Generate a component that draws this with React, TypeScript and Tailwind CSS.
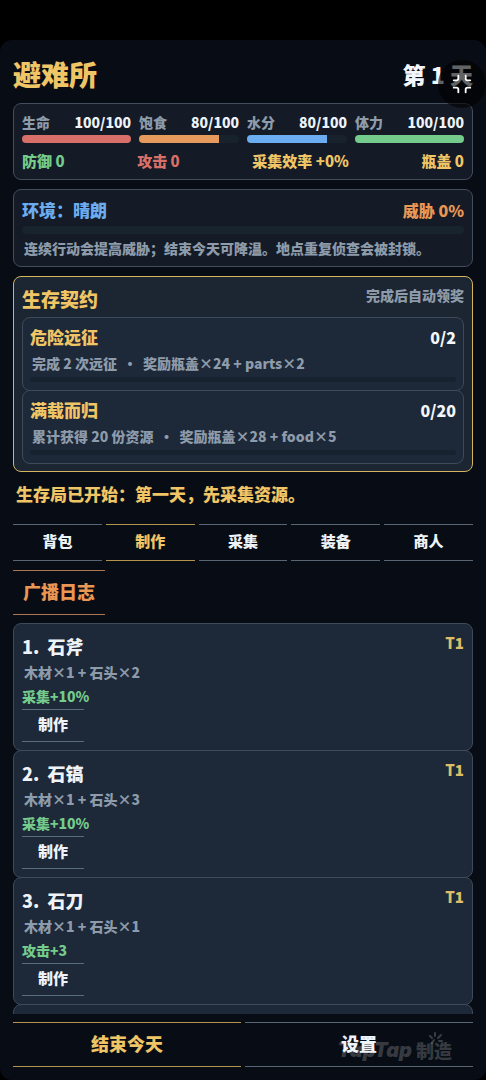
import { Minimize } from "lucide-react";

const stats = [
  { name: "生命", value: 100, max: 100, bar: "bg-[#d86f68]" },
  { name: "饱食", value: 80, max: 100, bar: "bg-[#e69b5c]" },
  { name: "水分", value: 80, max: 100, bar: "bg-[#6cacf0]" },
  { name: "体力", value: 100, max: 100, bar: "bg-[#74cb8b]" },
];

const contracts = [
  { title: "危险远征", progress: "0/2", detail: "完成 2 次远征", reward: "奖励瓶盖×24 + parts×2" },
  { title: "满载而归", progress: "0/20", detail: "累计获得 20 份资源", reward: "奖励瓶盖×28 + food×5" },
];

const tabs = ["背包", "制作", "采集", "装备", "商人"];

const recipes = [
  { name: "石斧", cost: "木材×1 + 石头×2", effect: "采集+10%" },
  { name: "石镐", cost: "木材×1 + 石头×3", effect: "采集+10%" },
  { name: "石刀", cost: "木材×1 + 石头×1", effect: "攻击+3" },
];

function Stats() {
  return (
    <section className="rounded-lg border border-[#434d5b] bg-[#141b27] px-2 pt-2 pb-2">
      <div className="grid grid-cols-[12fr_11fr_11fr_12fr] gap-x-2">
        {stats.map((s) => (
          <div key={s.name}>
            <div className="flex h-5 items-center justify-between text-sm">
              <span className="text-[#8d9baa]">{s.name}</span>
              <span className="text-[#eef3f8]">
                {s.value}/{s.max}
              </span>
            </div>
            <div className="mt-[3px] h-2 overflow-hidden rounded-full bg-[#18222c]">
              <div className={`h-full ${s.bar}`} style={{ width: `${(s.value / s.max) * 100}%` }} />
            </div>
          </div>
        ))}
      </div>
      <div className="mt-2 flex h-5 items-center justify-between text-[15px]">
        <span className="text-[#74cb8b]">防御 0</span>
        <span className="text-[#d86f68]">攻击 0</span>
        <span className="text-[#efc566]">采集效率 +0%</span>
        <span className="text-[#efc566]">瓶盖 0</span>
      </div>
    </section>
  );
}

function Environment() {
  return (
    <section className="mt-[9px] rounded-lg border border-[#434d5b] bg-[#141b27] px-2 pt-2 pb-2">
      <div className="flex h-6 items-center justify-between">
        <h2 className="text-[17px] text-[#6cacf0]">环境：晴朗</h2>
        <span className="text-base text-[#ea9754]">威胁 0%</span>
      </div>
      <div className="mt-1 h-2 rounded-sm bg-[#18242d]" />
      <p className="mt-1 flex h-5 items-center pl-0.5 text-sm text-[#8d9baa]">
        连续行动会提高威胁；结束今天可降温。地点重复侦查会被封锁。
      </p>
    </section>
  );
}

function Contracts() {
  return (
    <section className="mt-[9px] rounded-lg border border-[#d5b45f] bg-[#1c2532] px-2 pt-2 pb-2">
      <div className="flex h-8 items-start justify-between">
        <h2 className="text-[19px] leading-7 text-[#efc566]">生存契约</h2>
        <span className="text-sm text-[#8d9baa]">完成后自动领奖</span>
      </div>
      {contracts.map((c) => (
        <article key={c.title} className="-mb-px rounded-lg border border-[#3e4a58] bg-[#1d2838] px-[7px] pt-[7px] pb-1">
          <div className="flex h-6 items-center justify-between">
            <h3 className="text-[17px] text-[#efc566]">{c.title}</h3>
            <span className="text-base text-[#f3f7fb]">{c.progress}</span>
          </div>
          <p className="flex h-7 items-center gap-1.5 pl-0.5 text-sm text-[#8d9baa]">
            <span>{c.detail}</span>
            <span>•</span>
            <span>{c.reward}</span>
          </p>
          <div className="mb-1 h-[5px] rounded-sm bg-[#18222e]" />
        </article>
      ))}
    </section>
  );
}

export default function App() {
  return (
    <div className="relative flex h-screen flex-col bg-black pt-10 font-['Noto_Sans_CJK_SC',sans-serif] font-black">
      <main className="flex min-h-0 flex-1 flex-col rounded-xl bg-[#080d15] px-[13px] pb-[13px]">
        <header className="flex h-[63px] shrink-0 items-center justify-between pt-1">
          <h1 className="text-[28px] leading-10 text-[#efc566]">避难所</h1>
          <p className="text-[23px] leading-8 text-[#f3f7fb]">第 1 天</p>
        </header>

        <Stats />
        <Environment />
        <Contracts />

        <p className="flex h-11 shrink-0 items-center pl-[3px] text-[17px] text-[#efc566]">
          生存局已开始：第一天，先采集资源。
        </p>

        <nav className="mt-2 grid shrink-0 grid-cols-5 gap-1">
          {tabs.map((t) => (
            <button
              key={t}
              type="button"
              className={
                t === "制作"
                  ? "h-[37px] border-y border-[#b3934b] pb-0.5 text-[15px] text-[#efc566]"
                  : "h-[37px] border-y border-[#596572] pb-0.5 text-[15px] text-[#eef3f8]"
              }
            >
              {t}
            </button>
          ))}
        </nav>
        <button
          type="button"
          className="mt-[9px] h-[45px] shrink-0 self-start border-y border-[#ad7650] px-[10px] pb-1 text-lg text-[#ea9754]"
        >
          广播日志
        </button>

        <ol className="mt-2 min-h-0 flex-1 overflow-y-auto [scrollbar-width:none]">
          {recipes.map((r, i) => (
            <li key={r.name} className="-mb-px rounded-lg border border-[#3e4a58] bg-[#1d2838] px-2 pt-2 pb-2">
              <div className="flex h-7 items-start justify-between">
                <h3 className="text-lg text-[#eef3f8]">
                  {i + 1}.&nbsp; {r.name}
                </h3>
                <span className="text-[15px] text-[#dfbd68]">T1</span>
              </div>
              <p className="flex h-6 items-center pl-0.5 text-sm text-[#8d9baa]">{r.cost}</p>
              <p className="flex h-6 items-center text-sm text-[#74cb8b]">{r.effect}</p>
              <button
                type="button"
                className="mt-px block h-[33px] border-y border-[#596c79] px-4 pb-0.5 text-[15px] text-[#eef3f8]"
              >
                制作
              </button>
            </li>
          ))}
          <li aria-hidden="true" className="h-32 rounded-lg border border-[#3e4a58] bg-[#1d2838]" />
        </ol>

        <footer className="mt-2 grid shrink-0 grid-cols-2 gap-1">
          <button type="button" className="h-[45px] border-y border-[#b3934b] pb-1 text-lg text-[#efc566]">
            结束今天
          </button>
          <button type="button" className="h-[45px] border-y border-[#596572] pb-1 text-lg text-[#eef3f8]">
            设置
          </button>
        </footer>
      </main>

      <button
        type="button"
        aria-label="退出全屏"
        className="absolute top-[60px] right-0 flex size-12 items-center justify-center rounded-full bg-black/60 text-white"
      >
        <Minimize size={22} strokeWidth={2} />
      </button>

      <div className="pointer-events-none absolute right-[34px] bottom-4 flex items-center gap-1 text-lg text-white/20">
        <span className="font-['Inter',sans-serif] text-xl italic">TapTap</span>
        <span className="relative">
          制造
          <svg
            className="absolute -top-1 left-3 h-3 w-4"
            viewBox="0 0 16 12"
            fill="none"
            stroke="currentColor"
            strokeWidth="2"
            strokeLinecap="round"
          >
            <path d="M2 4l2 2M7 1v3M13 3l-3 3M6 8l-2 3M11 9h3" />
          </svg>
        </span>
      </div>
    </div>
  );
}
